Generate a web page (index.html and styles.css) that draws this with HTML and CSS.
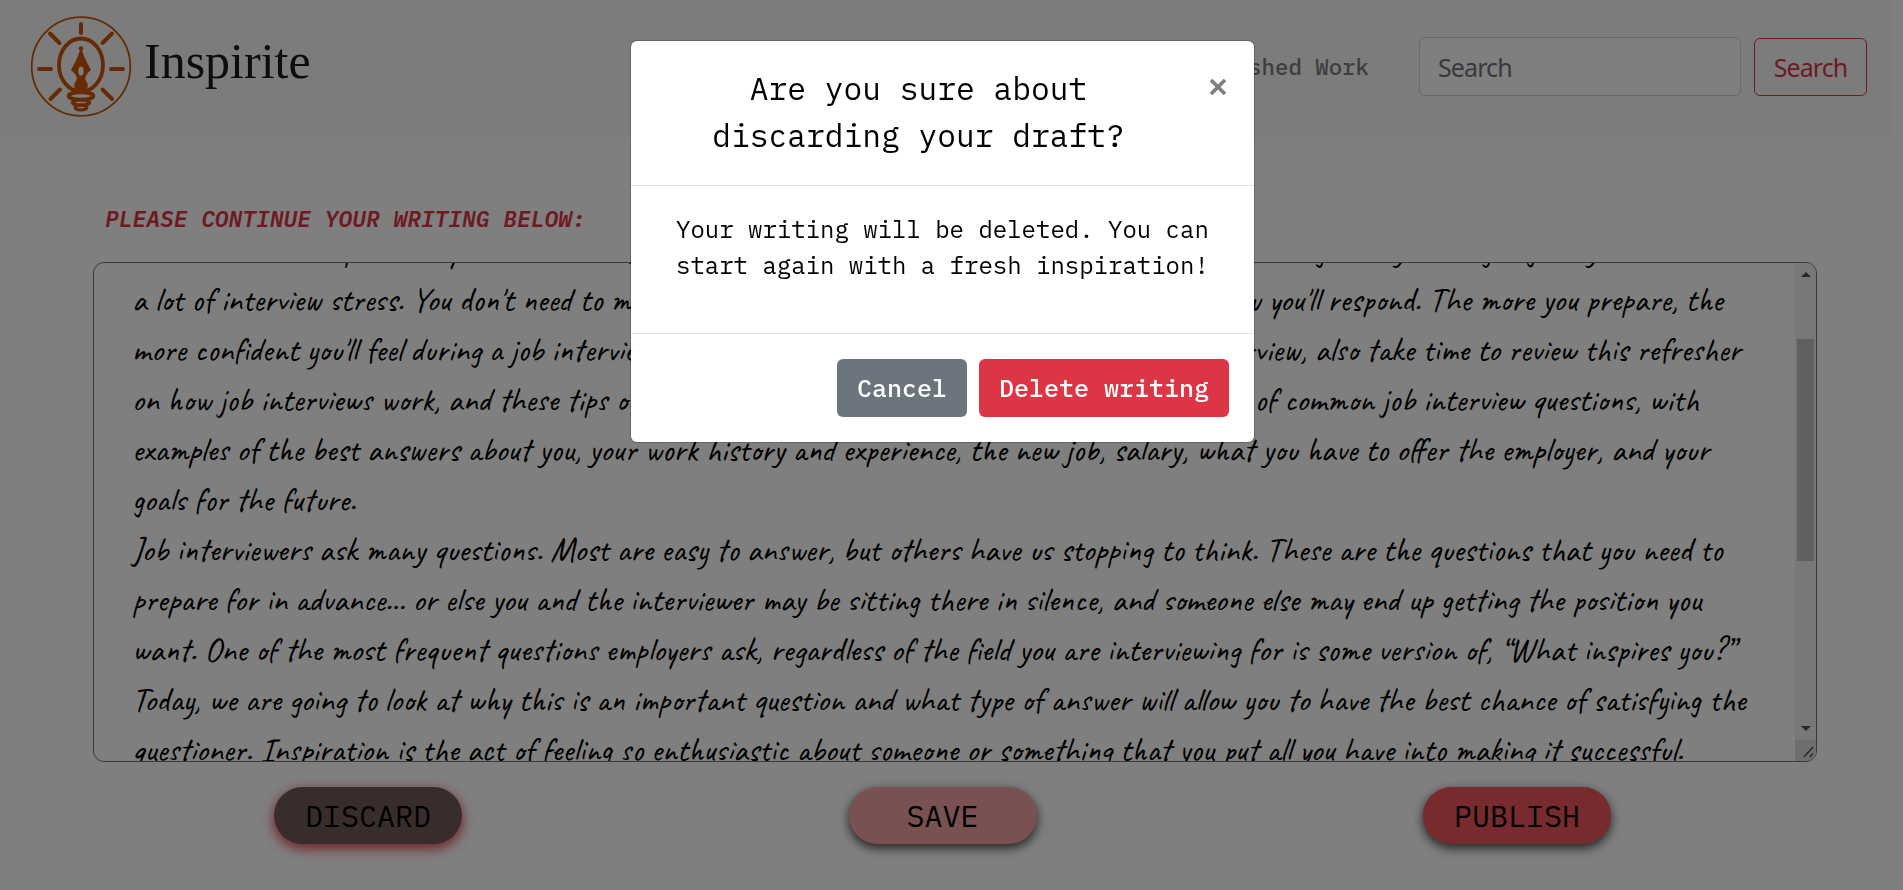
FILE: index.html
```html
<!DOCTYPE html>
<html lang="en">
<head>
<meta charset="utf-8">
<title>Inspirite</title>
<link rel="stylesheet" href="styles.css">
</head>
<body>
<nav class="navbar">
  <a class="brand">
    <svg class="brand-logo" width="102" height="102" viewBox="0 0 102 102" fill="none" stroke="#cc560a" stroke-linecap="round">
      <circle cx="51" cy="51.500" r="49.300" stroke-width="1.800"/>
      <path stroke-width="4" d="M51 9v9M20 18.500l9.500 9.500M82 18.500l-9.500 9.500M9 54h12M81 54h12M20.500 84l9.500-9.500M82 84l-9.500-9.500"/>
      <ellipse cx="51" cy="50" rx="22" ry="26.500" stroke-width="3.800"/>
      <path fill="#cc560a" stroke="none" d="M51 31q1.500 9 10 24q-7 6-5.500 10q5 6-.5 12h-8q-5.500-6-.5-12q1.500-4-5.500-10q8.500-15 10-24z"/>
      <circle cx="51" cy="33.500" r="2.300" fill="#cc560a" stroke="none"/>
      <ellipse cx="51" cy="56" rx="2.600" ry="4.500" fill="#f8f9fa" stroke="none"/>
      <ellipse cx="51" cy="81" rx="12.500" ry="3.600" stroke-width="3.600" fill="#f8f9fa"/>
      <ellipse cx="51" cy="87.500" rx="8.500" ry="2.600" stroke-width="3.400"/>
      <ellipse cx="51" cy="92.500" rx="5.800" ry="2.400" stroke-width="3.200"/>
    </svg>
    <span class="brand-name">Inspirite</span>
  </a>
  <div class="nav-right">
    <a class="nav-link">Published Work</a>
    <div class="search-input">Search</div>
    <button class="search-button">Search</button>
  </div>
</nav>

<main class="editor">
  <h1 class="editor-label">PLEASE CONTINUE YOUR WRITING BELOW:</h1>
  <div class="textarea">
    <div class="writing">
      <p class="line line-first"><span class="first-half">When interviewers post many concerns to us,</span><span>being steady when going early can avert</span></p>
      <p class="line">a lot of interview stress. You don't need to memorize an answer, but do take the time to consider how you'll respond. The more you prepare, the</p>
      <p class="line">more confident you'll feel during a job interview. If you're not sure what to expect <span class="wide">during a job interview</span>, also take time to review this refresher</p>
      <p class="line">on how job interviews work, and these tips on how to ace your next interview. <span class="semi">Review the entire</span> list of common job interview questions, with</p>
      <p class="line">examples of the best answers about you, your work history and experience, the new job, salary, what you have to offer the employer, and your</p>
      <p class="line">goals for the future.</p>
      <p class="line">Job interviewers ask many questions. Most are easy to answer, but others have us stopping to think. These are the questions that you need to</p>
      <p class="line">prepare for in advance... or else you and the interviewer may be sitting there in silence, and someone else may end up getting the position you</p>
      <p class="line">want. One of the most frequent questions employers ask, regardless of the field you are interviewing for is some version of, “What inspires you?”</p>
      <p class="line">Today, we are going to look at why this is an important question and what type of answer will allow you to have the best chance of satisfying the</p>
      <p class="line">questioner. Inspiration is the act of feeling so enthusiastic about someone or something that you put all you have into making it successful.</p>
    </div>
    <div class="scrollbar">
      <svg class="arrow" width="10" height="5" viewBox="0 0 10 5"><path d="M0 5L5 0l5 5z" fill="#505050"/></svg>
      <div class="thumb"></div>
      <svg class="arrow" width="10" height="5" viewBox="0 0 10 5"><path d="M0 0h10L5 5z" fill="#505050"/></svg>
      <div class="corner"><svg width="12" height="12" viewBox="0 0 12 12" stroke="#555" stroke-width="1.500"><path d="M1 11L10 1M7 11l3-3.500"/></svg></div>
    </div>
  </div>
  <div class="actions">
    <button class="pill discard">DISCARD</button>
    <button class="pill save">SAVE</button>
    <button class="pill publish">PUBLISH</button>
  </div>
</main>

<div class="backdrop">
  <section class="modal" role="dialog">
    <header class="modal-header">
      <h2 class="modal-title">Are you sure about discarding your draft?</h2>
      <svg class="close" width="18" height="16" viewBox="0 0 18 16"><path d="M2 1l14 14M16 1L2 15" stroke="#7f7f7f" stroke-width="3.600"/></svg>
    </header>
    <div class="modal-body">Your writing will be deleted. You can<br>start again with a fresh inspiration!</div>
    <footer class="modal-footer">
      <button class="btn btn-cancel">Cancel</button>
      <button class="btn btn-delete">Delete writing</button>
    </footer>
  </section>
</div>
</body>
</html>
```

FILE: styles.css
```css
* { box-sizing: border-box; }
body {
  margin: 0;
  height: 890px;
  overflow: hidden;
  background: #fff;
  font-family: "IBM Plex Mono", "Liberation Mono", monospace;
  color: #000;
}
h1, h2, p { margin: 0; font-weight: 400; }
button { font: inherit; margin: 0; padding: 0; }

.navbar {
  display: flex;
  justify-content: space-between;
  width: 1892px;
  height: 137px;
  padding: 0 25px 0 30px;
  background: #f8f9fa;
}
.brand { display: flex; padding-top: 15px; }
.brand-name {
  margin: 17px 0 0 12px;
  font: 50px/58px "Liberation Serif", serif;
  color: #1a1a1a;
}
.nav-right { display: flex; padding-top: 37px; }
.nav-link {
  margin-right: 50px;
  font-size: 22.4px;
  line-height: 60px;
  font-weight: 500;
  color: #7c7c7d;
}
.search-input, .search-button {
  font: 25px/59px "Noto Sans", "Open Sans", sans-serif;
  letter-spacing: -0.9px;
  border-radius: 6px;
}
.search-input {
  width: 322px;
  height: 59px;
  padding-left: 18px;
  margin-right: 13px;
  background: #fff;
  border: 1px solid #ced4da;
  color: #6c757d;
}
.search-button {
  width: 113px;
  height: 58px;
  margin-top: 1px;
  line-height: 57px;
  background: transparent;
  border: 1px solid #dc3545;
  color: #dc3545;
}

.editor { padding: 0 86px 0 93px; }
.editor-label {
  padding: 64px 0 0 12px;
  height: 125px;
  font-size: 22.9px;
  line-height: 36px;
  font-weight: 600;
  font-style: italic;
  color: #dc3545;
}
.textarea {
  display: flex;
  justify-content: space-between;
  height: 500px;
  overflow: hidden;
  border: 1px solid #777;
  border-radius: 11px;
}
.writing {
  margin: -38px 0 0 38px;
  font: 33.33px/50px Caveat, cursive;
}
.line {
  height: 50px;
  white-space: nowrap;
}
.line-first { display: flex; margin-left: -5px; }
.first-half { width: 1140px; }
.wide { margin-left: 16px; }
.semi { margin-left: 6px; }

.scrollbar {
  display: flex;
  flex-direction: column;
  align-items: center;
  width: 21px;
  background: #f1f1f1;
}
.arrow { margin-top: 9px; flex: none; }
.thumb {
  width: 17px;
  height: 222px;
  margin: 62px 0 156px;
  background: #c1c1c1;
  flex: none;
}
.corner {
  display: flex;
  align-items: flex-end;
  justify-content: flex-end;
  width: 21px;
  height: 22px;
  margin-top: 9px;
  padding: 0 1px 3px 0;
  background: #dcdcdc;
}

.actions {
  display: flex;
  justify-content: space-between;
  padding: 25px 206px 0 181px;
}
.pill {
  width: 188px;
  height: 57px;
  border: 0;
  border-radius: 29px;
  font-size: 30px;
  line-height: 57px;
  color: #000;
  box-shadow: 0 4px 11px rgba(0, 0, 0, .75);
}
.discard { background: #725858; box-shadow: 0 4px 13px #e2333d; }
.save { background: #f2a2a2; }
.publish { background: #f0565c; }

.backdrop {
  position: fixed;
  inset: 0;
  padding: 41px 0 0 631px;
  background: rgba(0, 0, 0, .5);
}
.modal {
  width: 623px;
  height: 401px;
  background: #fff;
  border-radius: 6px;
  box-shadow: 0 0 0 1px rgba(0, 0, 0, .2);
}
.modal-header {
  display: flex;
  justify-content: space-between;
  height: 145px;
  padding: 25px 27px 0 75px;
  border-bottom: 1px solid #dee2e6;
}
.modal-title {
  width: 425px;
  font-size: 31.25px;
  line-height: 46.8px;
  text-align: center;
}
.close { margin-top: 13px; }
.modal-body {
  height: 148px;
  padding: 25px 0 0 45px;
  font-size: 24px;
  line-height: 36px;
  white-space: nowrap;
  border-bottom: 1px solid #dee2e6;
}
.modal-footer {
  display: flex;
  justify-content: flex-end;
  gap: 12px;
  padding: 25px 25px 0;
}
.btn {
  height: 58px;
  border: 0;
  border-radius: 6px;
  font-size: 25px;
  font-weight: 500;
  line-height: 58px;
  color: #fff;
}
.btn-cancel { width: 130px; background: #6c757d; }
.btn-delete { width: 250px; background: #dc3545; }
```
